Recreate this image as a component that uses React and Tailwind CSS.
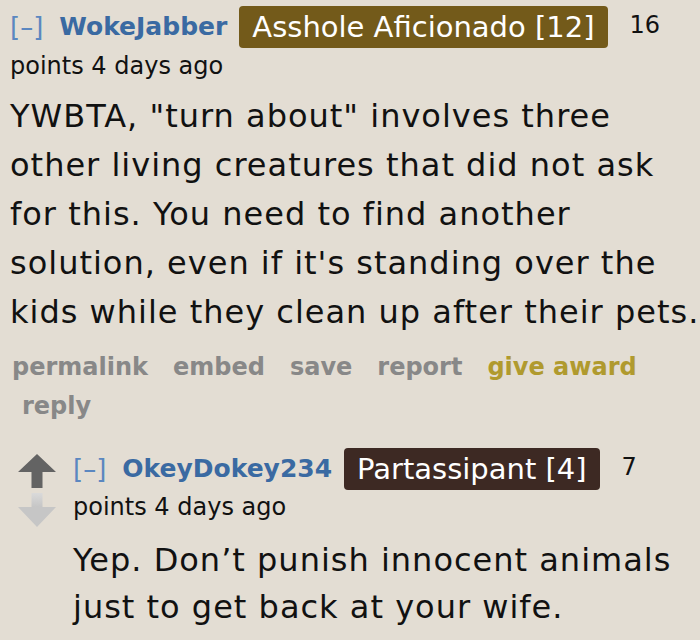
const sans = "font-['DejaVu_Sans','Verdana',sans-serif]";

function Header({ name, flair, flairBg, score }) {
  return (
    <div className="flex items-center">
      <span className="text-[26px] leading-[34px] text-[#5b87c0]">[–]</span>
      <span className="ml-[16px] text-[25px] leading-[34px] font-bold text-[#3a6aa2]">{name}</span>
      <span className={`ml-[12px] rounded-[4px] px-[13px] py-[3px] text-[29px] leading-[36px] text-white ${flairBg}`}>
        {flair}
      </span>
      <span className="ml-[22px] self-start pt-[2px] text-[24px] leading-[34px] text-[#111]">{score}</span>
    </div>
  );
}

export default function App() {
  return (
    <div className={`h-[640px] w-[700px] overflow-hidden bg-[#e3ddd3] text-[#111] ${sans}`}>
      <div className="pl-[10px] pt-[6px]">
        <Header name="WokeJabber" flair="Asshole Aficionado [12]" flairBg="bg-[#735a1a]" score="16" />
        <div className="mt-[3px] text-[24px] leading-[30px]">points 4 days ago</div>
        <p className="-mr-[10px] mt-[11px] text-[32px] leading-[49px] tracking-[1px]">
          YWBTA, "turn about" involves three other living creatures that did not ask for this. You need to find another solution, even if it's standing over the kids while they clean up after their pets.
        </p>
        <ul className="mt-[11px] flex flex-wrap text-[24px] font-bold leading-[39px] text-[#888]">
          <li className="mr-[25px] pl-[2px]">permalink</li>
          <li className="mr-[25px]">embed</li>
          <li className="mr-[25px]">save</li>
          <li className="mr-[25px]">report</li>
          <li className="mr-[25px] text-[#b09a2e]">give award</li>
          <li className="pl-[12px]">reply</li>
        </ul>
      </div>

      <div className="mt-[22px] flex pl-[18px]">
        <div className="flex w-[38px] flex-col pt-[6px]">
          <svg width="38" height="34" viewBox="0 0 38 34">
            <path d="M19 0 L38 18 L24.5 18 L24.5 34 L13.5 34 L13.5 18 L0 18 Z" fill="#636363" />
          </svg>
          <svg className="mt-[5px]" width="38" height="34" viewBox="0 0 38 34">
            <defs>
              <linearGradient id="dn" x1="0" y1="0" x2="0" y2="1">
                <stop offset="0" stopColor="#dadada" />
                <stop offset="0.4" stopColor="#c6c6c6" />
                <stop offset="1" stopColor="#c6c6c6" />
              </linearGradient>
            </defs>
            <path d="M13.5 0 L24.5 0 L24.5 14 L38 14 L19 34 L0 14 L13.5 14 Z" fill="url(#dn)" />
          </svg>
        </div>
        <div className="ml-[17px]">
          <Header name="OkeyDokey234" flair="Partassipant [4]" flairBg="bg-[#3d2923]" score="7" />
          <div className="mt-[2px] text-[24px] leading-[30px]">points 4 days ago</div>
          <p className="mt-[15px] text-[32px] leading-[47px] tracking-[1px]">
            Yep. Don’t punish innocent animals just to get back at your wife.
          </p>
        </div>
      </div>
    </div>
  );
}
